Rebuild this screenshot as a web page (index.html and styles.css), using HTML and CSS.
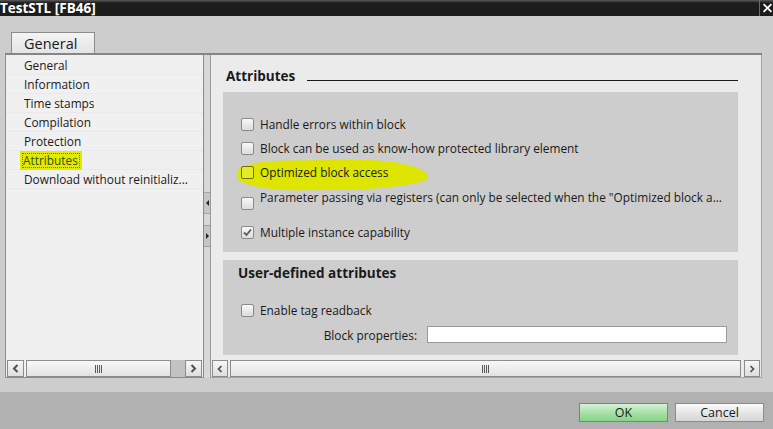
FILE: index.html
```html
<!DOCTYPE html>
<html>
<head>
    <title>TestSTL [FB46]</title>
    <link rel="stylesheet" href="styles.css">
</head>
<body>
<div class="window">
    <div class="titlebar">
        <span class="title">TestSTL [FB46]</span>
        <span class="close">
            <svg width="14" height="14" viewBox="0 0 14 14"><path d="M2 2 L12 12 M12 2 L2 12" stroke="#fff" stroke-width="2.2" fill="none"/></svg>
        </span>
    </div>

    <div class="main">
        <div class="tabs">
            <div class="tab">General</div>
        </div>

        <div class="frame">
            <!-- left navigation -->
            <div class="nav-pane">
                <ul class="nav-list">
                    <li>General</li>
                    <li>Information</li>
                    <li>Time stamps</li>
                    <li>Compilation</li>
                    <li>Protection</li>
                    <li><span class="selected">Attributes</span></li>
                    <li>Download without reinitializ...</li>
                </ul>
                <div class="hscroll">
                    <span class="sbtn"><svg width="7" height="9" viewBox="0 0 7 9"><path d="M5.5 1 L2 4.5 L5.5 8" stroke="#505050" stroke-width="2" fill="none"/></svg></span>
                    <span class="thumb thumb-short"><span class="grip"></span></span>
                    <span class="track"></span>
                    <span class="sbtn"><svg width="7" height="9" viewBox="0 0 7 9"><path d="M1.5 1 L5 4.5 L1.5 8" stroke="#505050" stroke-width="2" fill="none"/></svg></span>
                </div>
            </div>

            <div class="splitter">
                <span class="split-btn"><span class="tri-left"></span></span>
                <span class="split-btn"><span class="tri-right"></span></span>
            </div>

            <!-- right content -->
            <div class="content-pane">
                <div class="content">
                    <div class="section-title">
                        <span>Attributes</span>
                        <span class="rule"></span>
                    </div>

                    <div class="group group-attrs">
                        <div class="check-row"><span class="checkbox"></span>Handle errors within block</div>
                        <div class="check-row"><span class="checkbox"></span>Block can be used as know-how protected library element</div>
                        <div class="check-row marked">
                            <span class="marker"></span>
                            <span class="checkbox clear"></span>
                            <span class="label">Optimized block access</span>
                        </div>
                        <div class="check-row tall"><span class="checkbox"></span><span class="label">Parameter passing via registers (can only be selected when the "Optimized block a...</span></div>
                        <div class="check-row"><span class="checkbox checked"><svg width="11" height="11" viewBox="0 0 11 11"><path d="M2 5.5 L4.5 8 L9 2.5" stroke="#5a5a5a" stroke-width="1.8" fill="none"/></svg></span>Multiple instance capability</div>
                    </div>

                    <div class="group group-user">
                        <div class="group-title">User-defined attributes</div>
                        <div class="check-row"><span class="checkbox"></span>Enable tag readback</div>
                        <div class="field-row">
                            <span class="field-label">Block properties:</span>
                            <span class="field-input"></span>
                        </div>
                    </div>
                </div>
                <div class="hscroll">
                    <span class="sbtn small"><svg width="6" height="8" viewBox="0 0 6 8"><path d="M4.5 1 L1.5 4 L4.5 7" stroke="#505050" stroke-width="1.7" fill="none"/></svg></span>
                    <span class="thumb thumb-wide"><span class="grip"></span></span>
                    <span class="sbtn small"><svg width="6" height="8" viewBox="0 0 6 8"><path d="M1.5 1 L4.5 4 L1.5 7" stroke="#505050" stroke-width="1.7" fill="none"/></svg></span>
                </div>
            </div>
        </div>
    </div>

    <div class="footer">
        <button class="btn btn-ok">OK</button>
        <button class="btn">Cancel</button>
    </div>
</div>
</body>
</html>
```
FILE: styles.css
```css
body {
    margin: 0;
    width: 773px;
    height: 429px;
    overflow: hidden;
    background: #cdcdcd;
    color: #1a1a1a;
    font-family: "Open Sans", "DejaVu Sans", sans-serif;
    font-size: 11.85px;
}
.window {
    display: flex;
    flex-direction: column;
    height: 429px;
}

/* title bar */
.titlebar {
    height: 16px;
    flex: none;
    display: flex;
    justify-content: space-between;
    align-items: center;
    background: linear-gradient(#5c5c5c 0, #2e2e2e 2px, #1c1c1c 3px);
}
.title {
    color: white;
    font-weight: bold;
    font-size: 13.5px;
    line-height: 16px;
    margin-left: 0;
}
.close {
    height: 16px;
    width: 11px;
    border-left: 1px solid #6a6a6a;
    display: flex;
    align-items: center;
    padding-left: 2px;
    overflow: hidden;
}

/* main area */
.main {
    flex: 1;
    padding-top: 16px;
}
.tabs {
    height: 21px;
    display: flex;
    padding-left: 11px;
}
.tab {
    width: 84px;
    height: 21px;
    box-sizing: border-box;
    border: 1px solid #8c8c8c;
    border-bottom: none;
    background: linear-gradient(#f4f4f4, #e4e4e4);
    font-size: 14.5px;
    line-height: 21px;
    padding-left: 12px;
}
.frame {
    margin: 0 11px 0 5px;
    height: 325px;
    border-top: 2px solid #858585;
    box-sizing: border-box;
    display: flex;
}

/* left navigation */
.nav-pane {
    width: 199px;
    box-sizing: border-box;
    border-left: 1px solid #8c8c8c;
    border-right: 1px solid #8c8c8c;
    border-bottom: 1px solid #8c8c8c;
    background: #f0f0f0;
    display: flex;
    flex-direction: column;
}
.nav-list {
    flex: 1;
    list-style: none;
    margin: 0;
    padding: 1px 0 0 0;
}
.nav-list li {
    height: 18px;
    line-height: 18px;
    border-bottom: 1px solid #e9e9e9;
    padding-left: 18px;
    white-space: nowrap;
}
.selected {
    display: inline-block;
    margin: -1px 0 0 -4px;
    padding: 0 4px 0 3px;
    line-height: 19px;
    background: #e2ea00;
    color: #3a5200;
    outline: 1px dotted #6a7a00;
    outline-offset: -3px;
}

/* scrollbars */
.hscroll {
    height: 17px;
    flex: none;
    display: flex;
    padding: 0 1px;
    background: #f0f0f0;
}
.sbtn {
    width: 17px;
    height: 17px;
    box-sizing: border-box;
    border: 1px solid #8c8c8c;
    background: linear-gradient(#f6f6f6, #dedede);
    display: flex;
    align-items: center;
    justify-content: center;
}
.sbtn.small {
    width: 16px;
}
.thumb {
    height: 17px;
    box-sizing: border-box;
    border: 1px solid #8c8c8c;
    background: linear-gradient(#f8f8f8, #e2e2e2);
    display: flex;
    align-items: center;
    justify-content: center;
}
.thumb-short {
    width: 145px;
    margin-left: 2px;
}
.thumb-wide {
    flex: 1;
    margin: 0 3px 0 2px;
}
.track {
    flex: 1;
    background: #c2c2c2;
}
.grip {
    width: 7px;
    height: 8px;
    background: repeating-linear-gradient(90deg, #5a5a5a 0 1px, transparent 1px 2px);
}

/* splitter */
.splitter {
    width: 7px;
    flex: none;
    background: #d8d8d8;
    border-right: 1px solid #9a9a9a;
    box-sizing: border-box;
    display: flex;
    flex-direction: column;
    padding-top: 137px;
    gap: 11px;
}
.split-btn {
    height: 20px;
    background: #c6c6c6;
    border-top: 1px solid #a6a6a6;
    border-bottom: 1px solid #a6a6a6;
    display: flex;
    align-items: center;
    justify-content: center;
}
.tri-left {
    border-right: 3px solid #222;
    border-top: 3px solid transparent;
    border-bottom: 3px solid transparent;
}
.tri-right {
    border-left: 3px solid #222;
    border-top: 3px solid transparent;
    border-bottom: 3px solid transparent;
}

/* right content */
.content-pane {
    flex: 1;
    background: #ebebeb;
    border-right: 1px solid #a4a4a4;
    border-bottom: 1px solid #a4a4a4;
    display: flex;
    flex-direction: column;
}
.content-pane .hscroll {
    background: #ebebeb;
}
.content {
    flex: 1;
    padding-top: 12px;
}
.section-title {
    display: flex;
    align-items: flex-end;
    padding-left: 15px;
    margin-right: 23px;
    height: 18px;
    font-size: 13.5px;
    font-weight: bold;
    line-height: 18px;
}
.rule {
    flex: 1;
    margin: 0 0 4px 12px;
    border-bottom: 1.5px solid #1a1a1a;
}
.group {
    background: #cdcdcd;
    margin: 0 23px 0 12px;
}
.group-attrs {
    margin-top: 7px;
    padding: 20px 0 8px 0;
}
.group-user {
    margin-top: 8px;
    padding: 4px 0 12px 0;
}
.group-title {
    padding-left: 15px;
    font-size: 13.5px;
    font-weight: bold;
    line-height: 18px;
    margin-bottom: 16px;
}
.check-row {
    position: relative;
    height: 24px;
    display: flex;
    align-items: center;
    padding-left: 18px;
    white-space: nowrap;
}
.check-row.tall {
    height: 36px;
    align-items: flex-start;
}
.check-row.tall .checkbox {
    margin-top: 13px;
}
.check-row.tall .label {
    margin-top: 5px;
    line-height: 16px;
}
.checkbox {
    width: 13px;
    height: 13px;
    flex: none;
    box-sizing: border-box;
    border: 1px solid #8a8a8a;
    border-radius: 2px;
    background: linear-gradient(#f8f8f8, #dcdcdc);
    margin-right: 6px;
    display: flex;
    align-items: center;
    justify-content: center;
}

/* highlighter stroke drawn over the row */
.marker {
    position: absolute;
    left: 14px;
    top: 0;
    width: 191px;
    height: 30px;
    background: #dde500;
    border-radius: 30% 45% 55% 40% / 40% 70% 45% 55%;
    transform: rotate(-0.6deg);
}
.marked .checkbox,
.marked .label {
    position: relative;
}
.checkbox.clear {
    background: rgba(255, 255, 160, 0.25);
    border-color: #707000;
}

.field-row {
    display: flex;
    align-items: center;
    margin-top: 4px;
    height: 17px;
}
.field-label {
    width: 194px;
    text-align: right;
    margin-right: 10px;
}
.field-input {
    width: 300px;
    height: 17px;
    box-sizing: border-box;
    border: 1px solid #9a9a9a;
    background: white;
}

/* footer */
.footer {
    height: 37px;
    flex: none;
    background: #b1b1b1;
    display: flex;
    justify-content: flex-end;
    gap: 7px;
    padding: 11px 9px 0 0;
    box-sizing: border-box;
}
.btn {
    width: 89px;
    height: 19px;
    padding: 0;
    border: 1px solid #8a8a8a;
    background: linear-gradient(#fbfbfb, #e6e6e6 50%, #d6d6d6);
    font-family: "Open Sans", "DejaVu Sans", sans-serif;
    font-size: 12.5px;
    line-height: 17px;
    color: #1a1a1a;
}
.btn-ok {
    border-color: #5f9a5f;
    background: linear-gradient(#d6f2d6, #a8e2a8 50%, #86d486);
}
```
